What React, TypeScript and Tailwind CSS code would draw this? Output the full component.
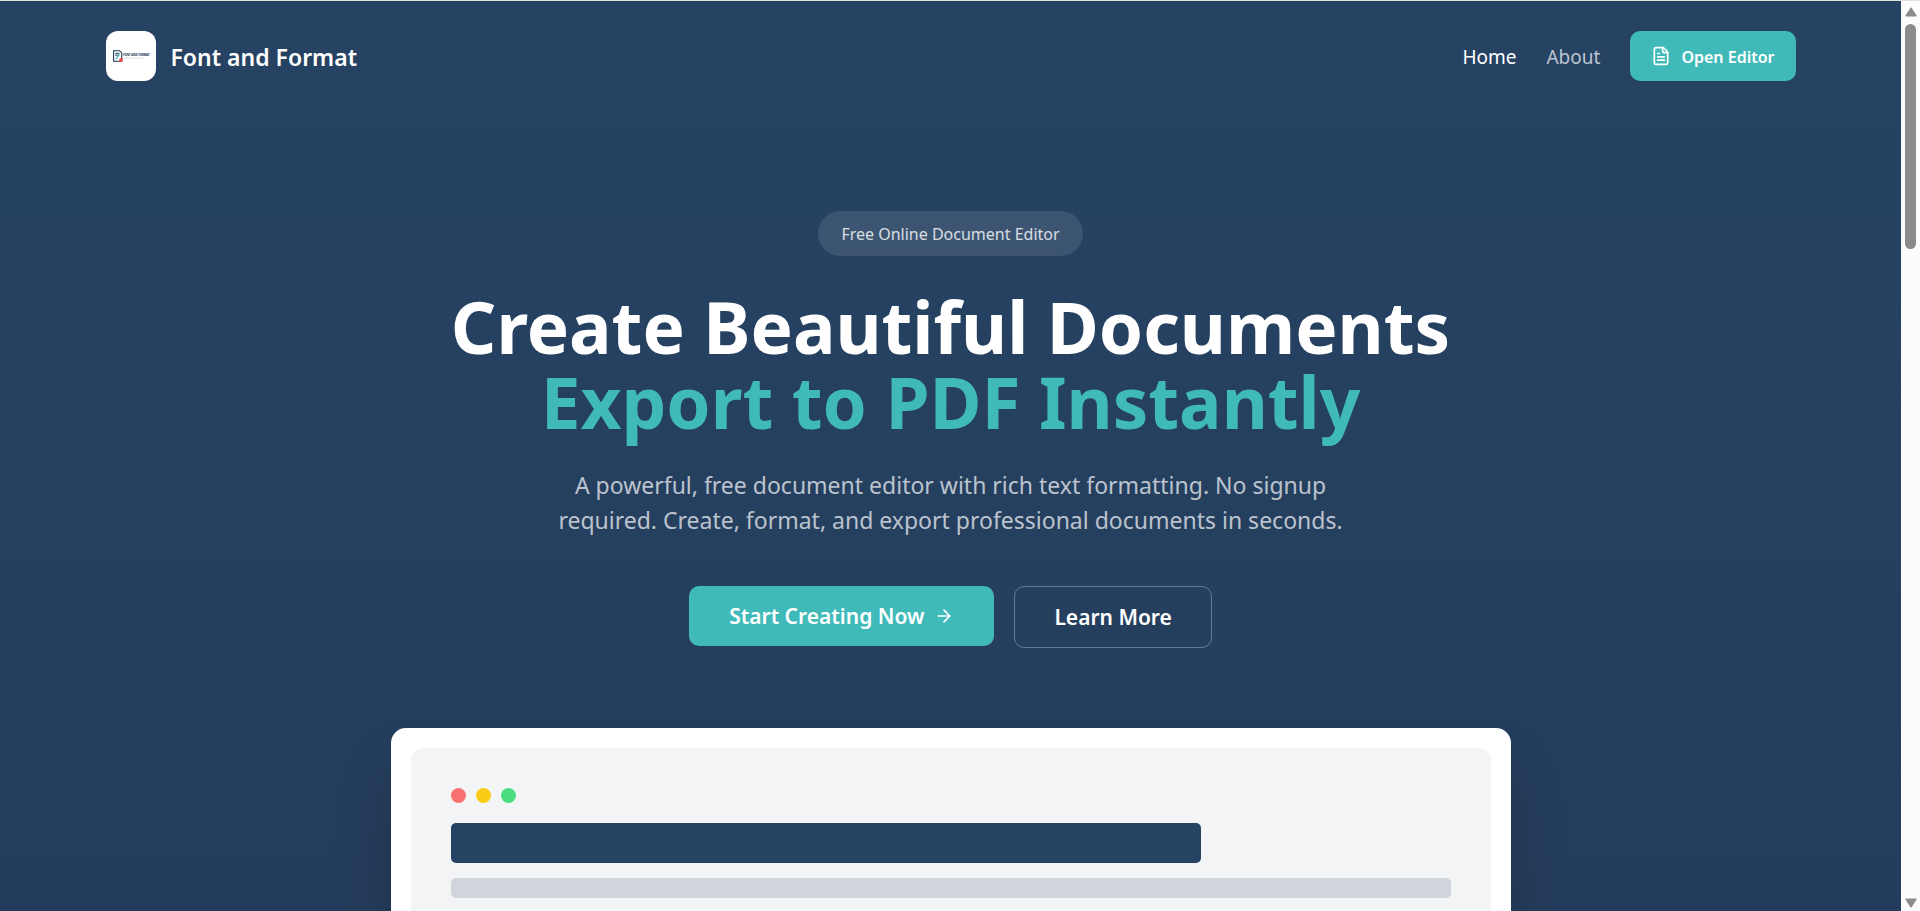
import { ArrowRight, FileText } from 'lucide-react';

function LogoMark() {
  return (
    <span className="flex size-[50px] items-center justify-center rounded-[12px] bg-white">
      <svg viewBox="0 0 50 50" className="size-full" aria-hidden="true">
        <path d="M7.6 19.7h5.9l2.2 2.2v8.4H7.6z" fill="#fff" stroke="#1d3b5c" strokeWidth="1.1" />
        <path d="M9.3 22.4h4M9.3 24.2h2.6" stroke="#1d3b5c" strokeWidth="1" />
        <path d="M10 28.2l3.6-5" stroke="#3cb7b5" strokeWidth="1.2" />
        <circle cx="15" cy="29" r="1.9" fill="#ee4b4b" />
        <text x="17" y="25" fontSize="2.75" fontWeight="800" fill="#1d3b5c" className="font-['Noto_Sans',sans-serif]">
          FONT AND FORMAT
        </text>
        <path d="M17.5 27.2h20" stroke="#c3c9d1" strokeWidth="0.8" strokeDasharray="2.2 0.6" />
      </svg>
    </span>
  );
}

function Header() {
  return (
    <header className="mx-auto flex w-full max-w-[1750px] items-center justify-between px-[30px] py-[30px]">
      <a href="#home" className="flex items-center gap-[15px] text-[23px] leading-[35px] font-semibold">
        <LogoMark />
        <span className="pt-[2px]">Font and Format</span>
      </a>
      <nav className="flex items-center gap-[30px] text-[19px] leading-[30px]">
        <a href="#home" className="pt-[2px]">Home</a>
        <a href="#about" className="pt-[2px] text-white/70">About</a>
        <button
          type="button"
          className="flex h-[50px] items-center gap-[10px] rounded-[10px] bg-[#40bab9] px-[21px] text-[16px] leading-[26px] font-semibold"
        >
          <FileText size={20} aria-hidden="true" />
          <span className="pt-[2px]">Open Editor</span>
        </button>
      </nav>
    </header>
  );
}

function EditorPreview() {
  return (
    <div className="mx-auto mt-[80px] w-full max-w-[1120px] rounded-[15px] bg-white p-[20px] shadow-[0_31px_62px_-15px_rgba(0,0,0,0.25)]">
      <div className="rounded-[12px] bg-[#f3f4f6] p-[40px]">
        <div className="mb-[20px] flex gap-[10px]">
          <span className="size-[15px] rounded-full bg-[#f87171]" />
          <span className="size-[15px] rounded-full bg-[#facc15]" />
          <span className="size-[15px] rounded-full bg-[#4ade80]" />
        </div>
        <div className="flex flex-col gap-[15px]">
          <div className="h-[40px] w-3/4 rounded-[5px] bg-[#264363]" />
          <div className="h-[20px] w-full rounded-[5px] bg-[#d1d5db]" />
          <div className="h-[20px] w-5/6 rounded-[5px] bg-[#d1d5db]" />
        </div>
      </div>
    </div>
  );
}

function Hero() {
  return (
    <section className="px-[30px] pt-[100px] pb-[120px] text-center">
      <p className="mx-auto w-fit rounded-full bg-white/10 px-[23px] pt-[11px] pb-[9px] text-[16px] leading-[25px] text-white/80">
        Free Online Document Editor
      </p>
      <h1 className="mt-[33px] text-[71px] leading-[75px] font-bold">
        Create Beautiful Documents
        <span className="block text-[#40bab9]">Export to PDF Instantly</span>
      </h1>
      <p className="mx-auto mt-[29px] max-w-[840px] text-[23px] leading-[35px] text-white/70">
        A powerful, free document editor with rich text formatting. No signup required. Create, format, and
        export professional documents in seconds.
      </p>
      <div className="mt-[48px] flex items-start justify-center gap-[20px] text-[21px] leading-[35px] font-semibold">
        <button type="button" className="flex h-[60px] items-center gap-[10px] rounded-[10px] bg-[#40bab9] px-[40px]">
          <span>Start Creating Now</span>
          <ArrowRight size={20} aria-hidden="true" />
        </button>
        <button type="button" className="h-[62px] rounded-[10px] border border-white/30 px-[39px]">
          Learn More
        </button>
      </div>
      <EditorPreview />
    </section>
  );
}

function ScrollRail() {
  return (
    <div className="flex w-[19px] shrink-0 flex-col items-center bg-[#fcfcfc] pt-[6px] pb-[3px]" aria-hidden="true">
      <svg viewBox="0 0 12 10" className="h-[10px] w-[12px]">
        <path d="M6 1.2 11 8.8H1z" fill="#8b8b8b" stroke="#8b8b8b" strokeWidth="1.4" strokeLinejoin="round" />
      </svg>
      <div className="my-[7px] w-[11px] flex-1">
        <div className="h-[26%] rounded-full bg-[#8b8b8b]" />
      </div>
      <svg viewBox="0 0 12 10" className="h-[10px] w-[12px]">
        <path d="M6 8.8 1 1.2h10z" fill="#8b8b8b" stroke="#8b8b8b" strokeWidth="1.4" strokeLinejoin="round" />
      </svg>
    </div>
  );
}

export default function App() {
  return (
    <div className="flex h-screen overflow-hidden border-t border-[#dce4da] font-['Noto_Sans',sans-serif] text-white">
      <div className="min-w-0 flex-1 overflow-hidden">
        <div className="bg-linear-to-b from-[#264363] to-[#243b5a]">
          <Header />
          <main>
            <Hero />
          </main>
        </div>
      </div>
      <ScrollRail />
    </div>
  );
}
